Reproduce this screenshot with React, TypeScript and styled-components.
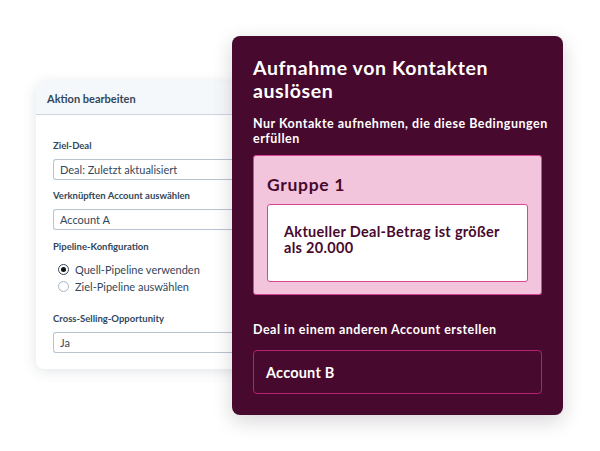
import React from 'react';
import styled, { createGlobalStyle } from 'styled-components';

const GlobalStyle = createGlobalStyle`
	html, body {
		margin: 0;
		padding: 0;
		background: #ffffff;
		font-family: Lato, "Noto Sans", sans-serif;
	}
`;

const Stage = styled.div`
	width: 600px;
	height: 451px;
	box-sizing: border-box;
	padding: 36px 0 0 36px;
	display: flex;
	align-items: flex-start;
	overflow: hidden;
`;

const EditCard = styled.div`
	width: 216px;
	height: 287px;
	margin-top: 46px;
	background: #ffffff;
	border-radius: 8px;
	box-shadow: 0 2px 14px rgba(45, 62, 80, 0.14);
	overflow: hidden;
	flex-shrink: 0;
`;

const CardHeader = styled.div`
	height: 33px;
	box-sizing: border-box;
	padding: 0 11px;
	display: flex;
	align-items: center;
	background: #f5f8fa;
	border-bottom: 1px solid #cbd6e2;
	color: #33475b;
	font-size: 11px;
	font-weight: 700;
`;

const CardBody = styled.div`
	padding: 25px 0 0 17px;
	display: flex;
	flex-direction: column;
`;

const FieldLabel = styled.div<{ $gap?: number }>`
	color: #33475b;
	font-size: 9.5px;
	font-weight: 700;
	white-space: nowrap;
	margin-top: ${({ $gap }) => $gap ?? 0}px;
	margin-bottom: 8px;
`;

const Input = styled.div`
	height: 21px;
	box-sizing: border-box;
	border: 1px solid #b8c4d0;
	border-right: none;
	border-radius: 3px 0 0 3px;
	background: #ffffff;
	padding: 0 6px;
	display: flex;
	align-items: center;
	color: #33475b;
	font-size: 11px;
	white-space: nowrap;
`;

const RadioGroup = styled.div`
	display: flex;
	flex-direction: column;
	gap: 4px;
	padding: 3px 0 0 5px;
`;

const RadioRow = styled.label`
	display: flex;
	align-items: center;
	gap: 6px;
	color: #33475b;
	font-size: 11px;
	height: 13px;
	white-space: nowrap;
`;

const RadioDot = styled.span<{ $checked?: boolean }>`
	width: 9px;
	height: 9px;
	border-radius: 50%;
	border: 1px solid ${({ $checked }) => ($checked ? '#33475b' : '#a9b6c3')};
	display: inline-flex;
	align-items: center;
	justify-content: center;
	&::after {
		content: '';
		width: 5px;
		height: 5px;
		border-radius: 50%;
		background: ${({ $checked }) => ($checked ? '#111' : 'transparent')};
	}
`;

const TriggerPanel = styled.div`
	width: 331px;
	height: 379px;
	margin-left: -20px;
	box-sizing: border-box;
	padding: 20px 21px 0 21px;
	background: #470a2e;
	border-radius: 8px;
	box-shadow: 0 6px 20px rgba(40, 20, 40, 0.18);
	color: #ffffff;
	flex-shrink: 0;
	position: relative;
	z-index: 1;
	display: flex;
	flex-direction: column;
	white-space: nowrap;
`;

const PanelTitle = styled.h1`
	margin: 0;
	font-size: 19.5px;
	line-height: 23px;
	font-weight: 700;
	letter-spacing: 0.6px;
`;

const PanelSubtitle = styled.div<{ $top: number }>`
	margin-top: ${({ $top }) => $top}px;
	font-size: 12.5px;
	line-height: 15px;
	font-weight: 700;
	letter-spacing: 0.5px;
`;

const GroupBox = styled.div`
	margin-top: 9px;
	height: 140px;
	box-sizing: border-box;
	background: #f3c5dc;
	border: 1px solid #d9449a;
	border-radius: 3px;
	padding: 19px 13px 0 13px;
	color: #470a2e;
`;

const GroupTitle = styled.div`
	font-size: 17.5px;
	font-weight: 700;
	line-height: 20px;
	letter-spacing: 0.7px;
	margin-bottom: 9px;
`;

const ConditionBox = styled.div`
	height: 78px;
	box-sizing: border-box;
	background: #ffffff;
	border: 1px solid #d9449a;
	border-radius: 3px;
	padding: 19px 16px 0 16px;
	font-size: 14.5px;
	line-height: 16px;
	font-weight: 700;
	letter-spacing: 0.3px;
`;

const AccountBox = styled.div`
	margin-top: 13px;
	height: 44px;
	box-sizing: border-box;
	border: 1px solid #b3226f;
	border-radius: 4px;
	padding: 0 12px;
	display: flex;
	align-items: center;
	font-size: 14.5px;
	font-weight: 700;
	letter-spacing: 0.2px;
`;

export default function App() {
	return (
		<>
			<GlobalStyle />
			<Stage>
				<EditCard>
					<CardHeader>Aktion bearbeiten</CardHeader>
					<CardBody>
						<FieldLabel>Ziel-Deal</FieldLabel>
						<Input>Deal: Zuletzt aktualisiert</Input>
						<FieldLabel $gap={10}>Verknüpften Account auswählen</FieldLabel>
						<Input>Account A</Input>
						<FieldLabel $gap={11}>Pipeline-Konfiguration</FieldLabel>
						<RadioGroup>
							<RadioRow>
								<RadioDot $checked />
								Quell-Pipeline verwenden
							</RadioRow>
							<RadioRow>
								<RadioDot />
								Ziel-Pipeline auswählen
							</RadioRow>
						</RadioGroup>
						<FieldLabel $gap={20}>Cross-Selling-Opportunity</FieldLabel>
						<Input>Ja</Input>
					</CardBody>
				</EditCard>
				<TriggerPanel>
					<PanelTitle>
						Aufnahme von Kontakten
						<br />
						auslösen
					</PanelTitle>
					<PanelSubtitle $top={14}>
						Nur Kontakte aufnehmen, die diese Bedingungen
						<br />
						erfüllen
					</PanelSubtitle>
					<GroupBox>
						<GroupTitle>Gruppe 1</GroupTitle>
						<ConditionBox>
							Aktueller Deal-Betrag ist größer
							<br />
							als 20.000
						</ConditionBox>
					</GroupBox>
					<PanelSubtitle $top={27}>Deal in einem anderen Account erstellen</PanelSubtitle>
					<AccountBox>Account B</AccountBox>
				</TriggerPanel>
			</Stage>
		</>
	);
}
